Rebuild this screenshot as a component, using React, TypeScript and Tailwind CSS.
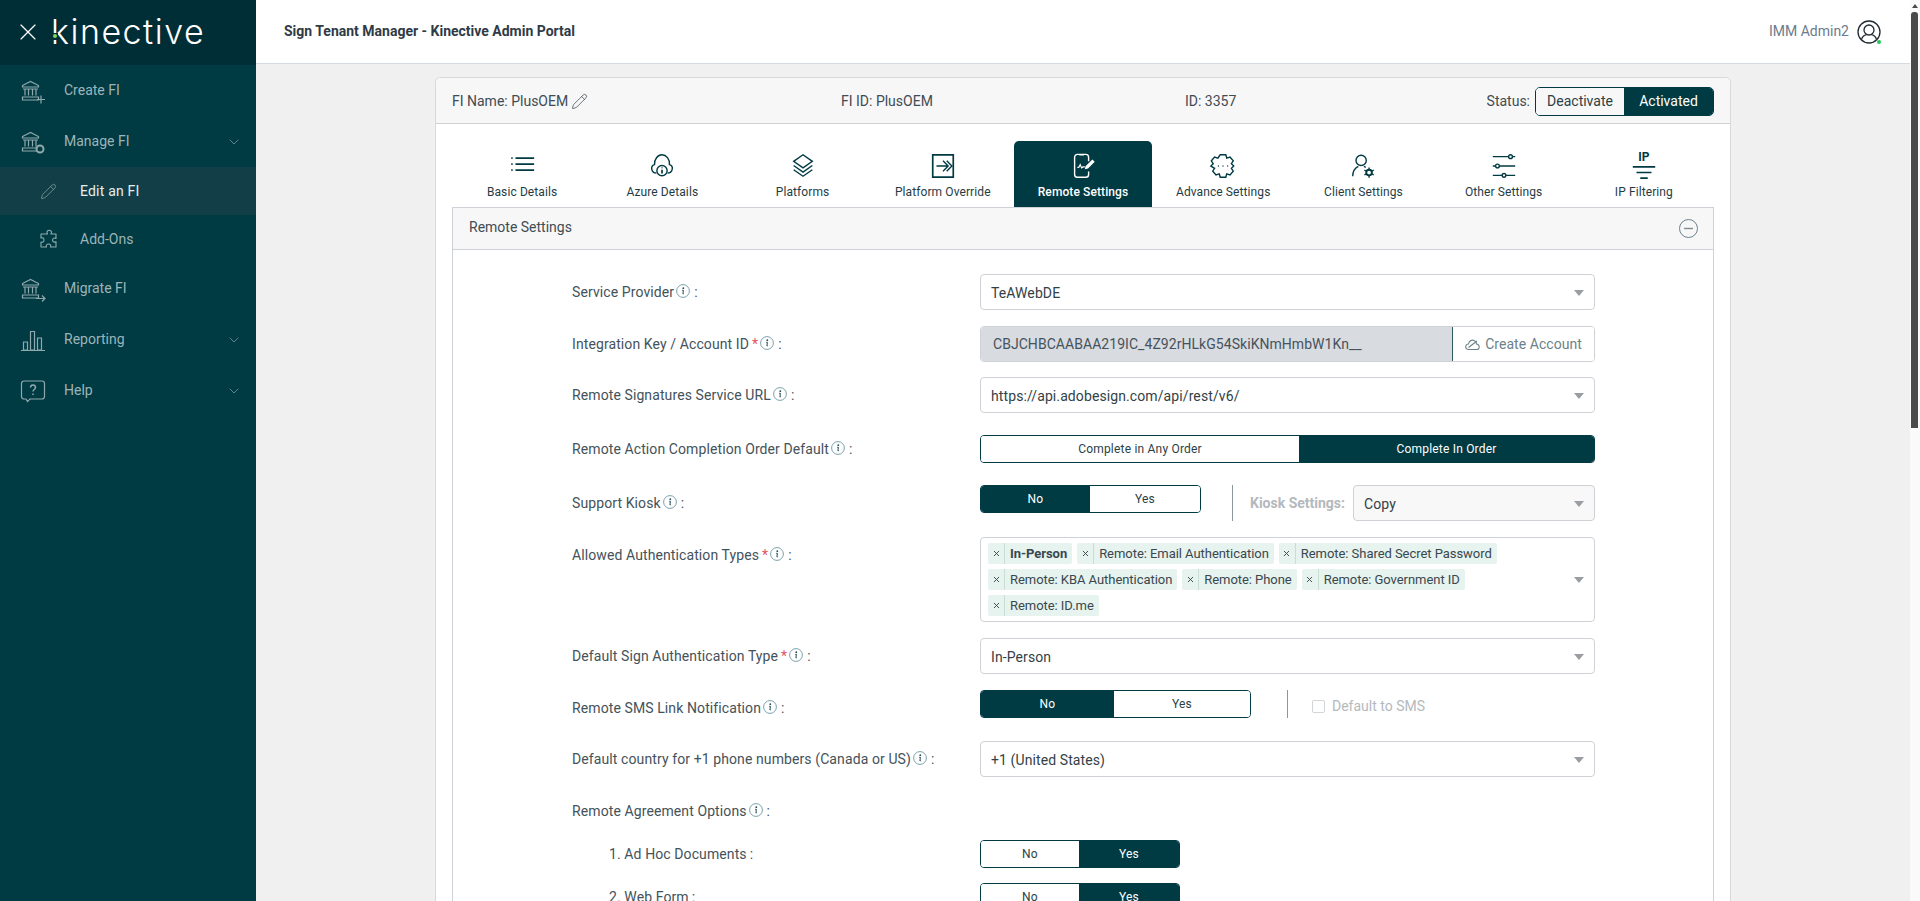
import React from "react"
import { ChevronDown, Pencil, X } from "lucide-react"

const Bank = ({ children }: { children?: React.ReactNode }) => (
  <svg width="26" height="26" viewBox="0 0 26 26" fill="none" stroke="#8fa9ad" strokeWidth="1.2">
    <path d="M2.5 7.5 10.5 3.5l8 4v1.5h-16z" />
    <path d="M5 11v6.5M8.5 11v6.5M12.5 11v6.5M16 11v6.5" />
    <path d="M3 11h15M2.5 19h16v3h-16z" />
    {children}
  </svg>
)

const BarsIcon = () => (
  <svg width="26" height="26" viewBox="0 0 26 26" fill="none" stroke="#8fa9ad" strokeWidth="1.2">
    <path d="M3.5 15h4v8h-4zM10.5 4.5h4V23h-4zM17.5 11h4v12h-4zM1 23.5h24" />
  </svg>
)

const HelpIcon = () => (
  <svg width="26" height="26" viewBox="0 0 26 26" fill="none" stroke="#8fa9ad" strokeWidth="1.2">
    <path d="M5 3h17a2.5 2.5 0 0 1 2.5 2.5v13A2.5 2.5 0 0 1 22 21H10l-2.5 2.5L6 21H4a2.5 2.5 0 0 1-2.5-2.5v-13A2.5 2.5 0 0 1 4 3z" />
    <path d="M10.5 9.5c0-3.500 5-3.500 5 0 0 2-2.500 2-2.500 4M13 15.500v1.500" strokeWidth="1.500" />
  </svg>
)

const PuzzleIcon = () => (
  <svg width="20" height="20" viewBox="0 0 20 20" fill="none" stroke="#8fa9ad" strokeWidth="1.1" strokeLinejoin="round">
    <path d="M8 3.500c0-3 4.500-3 4.500 0 0 1-.5 1.200-.5 1.500h5v4.500c-1.500-1-3.500-.3-3.500 1.500s2 2.700 3.500 1.700V18h-5.500c.8-1.500-.2-3-2-3s-2.800 1.500-2 3H2v-5c1.500.8 3-.2 3-2s-1.500-2.800-3-2V5h6.500c-.2-.5-.5-.7-.5-1.500z" />
  </svg>
)

const InfoDot = () => (
  <svg width="14" height="14" viewBox="0 0 14 14" fill="none" className="ml-[2px] shrink-0 -translate-y-[1px]">
    <circle cx="7" cy="7" r="6.400" stroke="#6d96a3" strokeWidth="0.9" />
    <circle cx="7.300" cy="4.200" r="0.900" fill="#234a55" />
    <path d="M6.200 6.300h1.200l-.5 3.500h.9" stroke="#234a55" strokeWidth="1" />
  </svg>
)

const Caret = () => (
  <svg width="10" height="6" viewBox="0 0 10 6" className="shrink-0">
    <path d="M0 0h10L5 6z" fill="#9a9ea2" />
  </svg>
)

const tabIcons: Record<string, React.ReactNode> = {
  basic: (
    <path d="M8 5.500h20M8 12h20M8 18.500h20M3.500 5.500h1.500M3.500 12h1.500M3.500 18.500h1.500" strokeWidth="1.800" />
  ),
  azure: (
    <>
      <path d="M9 21.500C3.500 21.500 2 14 7 12.500 6.500 7 10.500 2 15 2s8.500 4.500 8 10.500c5 1.500 3.500 9 -2 9" />
      <circle cx="15" cy="19" r="5.500" />
      <path d="M15 18v4M15 15.500v1" strokeWidth="1.800" />
    </>
  ),
  platforms: (
    <>
      <path d="M15 2 25 9 15 16 5 9z" />
      <path d="M5 13.500 15 20.500 25 13.500M5 18 15 25 25 18" />
    </>
  ),
  override: (
    <>
      <path d="M4 2h22v24H4z" strokeWidth="1.800" />
      <path d="M8 14h12M15 8.500l5.500 5.500-5.500 5.500M19 8.500l5.500 5.500L19 19.500" />
    </>
  ),
  remote: (
    <>
      <path d="M21 9V4.500A3 3 0 0 0 18 1.500H9a3 3 0 0 0-3 3V23a3 3 0 0 0 3 3h9a3 3 0 0 0 3-3v-3" />
      <path d="M11 2h5" />
      <path d="M9 15.500h1.500l1.500-3 1.500 3.500 1.500-1h2" strokeWidth="1.300" />
      <path d="M18.500 14.500 25 8l1.500 1.500-6.500 6.500-2 .5z" fill="currentColor" />
    </>
  ),
  advance: (
    <>
      <path d="M12 2h6l1 3.500 3.500-1 3.500 4-2 3 2.500 2.500-2.500 2.500 2 3-3.500 4-3.500-1-1 3.500h-6l-1-3.500-3.500 1-3.500-4 2-3L2 14l2.500-2.500-2-3 3.500-4 3.500 1z" />
      <path d="M9.500 14h1M14.500 14h1M19.500 14h1" />
    </>
  ),
  client: (
    <>
      <circle cx="13" cy="8" r="5.500" />
      <path d="M4 25c0-6 3-9 6-10.500M16 14.500l2 1" />
      <circle cx="21.500" cy="21" r="3" strokeWidth="2" />
      <path d="M21.500 15.500v2M21.500 24.500v2M16.500 18.500l2 1M24.500 22.500l2 1M16.500 23.500l2-1M24.500 19.500l2-1" strokeWidth="1.500" />
    </>
  ),
  other: (
    <>
      <path d="M3 4h17M24 4h3M3 14h3M10 14h17M3 24h10M17 24h10" strokeWidth="1.500" />
      <circle cx="22" cy="4" r="2" strokeWidth="1.500" />
      <circle cx="8" cy="14" r="2" strokeWidth="1.500" />
      <circle cx="15" cy="24" r="2" strokeWidth="1.500" />
    </>
  ),
  ip: <path d="M3 15h24M7 21h16M11 27h8" strokeWidth="1.800" />,
}

const tabs = [
  { id: "basic", label: "Basic Details" },
  { id: "azure", label: "Azure Details" },
  { id: "platforms", label: "Platforms" },
  { id: "override", label: "Platform Override" },
  { id: "remote", label: "Remote Settings" },
  { id: "advance", label: "Advance Settings" },
  { id: "client", label: "Client Settings" },
  { id: "other", label: "Other Settings" },
  { id: "ip", label: "IP Filtering" },
]

const chips = [
  "In-Person",
  "Remote: Email Authentication",
  "Remote: Shared Secret Password",
  "Remote: KBA Authentication",
  "Remote: Phone",
  "Remote: Government ID",
  "Remote: ID.me",
]

const Label = ({ text, required, info = true }: { text: string; required?: boolean; info?: boolean }) => (
  <div className="flex items-center text-[14px] leading-5 tracking-[0.1px] text-[#44525a]">
    <span>{text}</span>
    {required && <span className="ml-[3px] text-[#e2545f]">*</span>}
    {info && <InfoDot />}
    <span className={info ? "ml-[4px]" : "ml-[3px]"}>:</span>
  </div>
)

const Select = ({ value, muted }: { value: string; muted?: boolean }) => (
  <div
    className={`flex h-[36px] w-full items-center justify-between rounded border border-[#ced2d6] pl-[10px] pr-[10px] pt-[2px] text-[14px] tracking-[0.1px] text-[#333f46] ${
      muted ? "bg-[#f8f8f8]" : "bg-white"
    }`}
  >
    <span>{value}</span>
    <Caret />
  </div>
)

const Toggle = ({
  left,
  right,
  active,
  leftClass,
  rightClass,
}: {
  left: string
  right: string
  active: "left" | "right"
  leftClass: string
  rightClass: string
}) => (
  <div className="flex h-[28px] overflow-hidden rounded border border-[#003a43] text-[12px] tracking-[0.2px]">
    <div
      className={`flex items-center justify-center ${leftClass} ${
        active === "left" ? "bg-[#003a43] text-white" : "bg-white text-[#2b3f46]"
      }`}
    >
      {left}
    </div>
    <div
      className={`flex items-center justify-center ${rightClass} ${
        active === "right" ? "bg-[#003a43] text-white" : "bg-white text-[#2b3f46]"
      }`}
    >
      {right}
    </div>
  </div>
)

const NavItem = ({ icon, label, chevron }: { icon: React.ReactNode; label: string; chevron?: boolean }) => (
  <div className="flex h-[51px] items-center pl-[20px] pr-[14px] text-[14px] text-[#9cb5b9]">
    <div className="flex w-[44px] shrink-0 items-center">{icon}</div>
    <span className="flex-1">{label}</span>
    {chevron && <ChevronDown size={16} strokeWidth={1} className="text-[#8fa9ad]" />}
  </div>
)

const Row = ({ label, className, children, top }: { label: React.ReactNode; className: string; children: React.ReactNode; top?: boolean }) => (
  <div className={`grid grid-cols-[408px_615px] ${top ? "items-start" : "items-center"} ${className}`}>
    {label}
    {children}
  </div>
)

export default function App() {
  return (
    <div className="flex h-screen overflow-hidden bg-[#f0f0f0] font-['Roboto',sans-serif]">
      <aside className="flex w-[256px] shrink-0 flex-col bg-[#003a43]">
        <div className="flex h-[65px] shrink-0 items-center bg-[#002e37] pb-[1px] pl-[14px]">
          <X size={28} strokeWidth={1} className="text-white" />
          <div className="relative ml-[9px] font-['Inter',sans-serif] text-[34px] font-light leading-none tracking-[1.5px] text-white">
            kinective
            <span className="absolute left-[1px] top-[18px] h-[7px] w-[6px] bg-[#002e37]">
              <span className="absolute left-[1px] top-[1px] h-[4px] w-[4px] rounded-full bg-[#7ed957]" />
            </span>
          </div>
        </div>
        <NavItem
          label="Create FI"
          icon={
            <Bank>
              <path d="M17 21.500h8M21 17.500v8" />
            </Bank>
          }
        />
        <NavItem
          label="Manage FI"
          chevron
          icon={
            <Bank>
              <circle cx="20" cy="20" r="3.500" fill="#003a43" strokeWidth="2" />
            </Bank>
          }
        />
        <div className="flex h-[48px] items-center bg-[#123f47] pl-[40px] text-[14px] tracking-[0.2px] text-[#e6eeef]">
          <div className="w-[40px]">
            <Pencil size={17} strokeWidth={1} className="text-[#8fa9ad]" />
          </div>
          Edit an FI
        </div>
        <div className="flex h-[48px] items-center pl-[39px] text-[14px] text-[#9cb5b9]">
          <div className="w-[41px]">
            <PuzzleIcon />
          </div>
          Add-Ons
        </div>
        <NavItem
          label="Migrate FI"
          icon={
            <Bank>
              <path d="M16 22.500h9M22 19.500l3 3-3 3" />
            </Bank>
          }
        />
        <NavItem label="Reporting" chevron icon={<BarsIcon />} />
        <NavItem label="Help" chevron icon={<HelpIcon />} />
      </aside>

      <div className="flex min-w-0 flex-1 flex-col">
        <header className="flex h-[64px] shrink-0 items-center justify-between border-b border-[#d5d9e0] bg-white pl-[28px] pr-[29px]">
          <div className="text-[14px] font-bold text-[#2f3b46]">Sign Tenant Manager - Kinective Admin Portal</div>
          <div className="flex items-center gap-[8px] text-[14px] text-[#6b7c8c]">
            IMM Admin2
            <div className="relative">
              <svg width="24" height="24" viewBox="0 0 24 24" fill="none" stroke="#1f2a30" strokeWidth="1.300">
                <circle cx="12" cy="12" r="11" />
                <circle cx="12" cy="10" r="5" />
                <path d="M4.500 19.500c1-3.500 3.500-4.500 5-4.800M19.500 19.500c-1-3.500-3.500-4.500-5-4.800" />
              </svg>
              <span className="absolute bottom-0 right-0 h-[4px] w-[4px] rounded-full bg-[#22c55e]" />
            </div>
          </div>
        </header>

        <main className="min-h-0 flex-1 overflow-hidden">
          <div className="mx-auto mt-[13px] w-[1296px] rounded-t-[5px] border border-[#d9d9d9] bg-white">
            <div className="flex h-[46px] items-center rounded-t-[5px] border-b border-[#d0d0d0] bg-[#f7f7f7] pl-[16px] pr-[16px] pt-[2px] text-[14px] text-[#3f4c54]">
              <div className="flex w-[389px] items-center gap-[3px]">
                FI Name: PlusOEM
                <Pencil size={17} strokeWidth={1} className="text-[#333f46]" />
              </div>
              <div className="w-[344px]">FI ID: PlusOEM</div>
              <div className="flex-1">ID: 3357</div>
              <div className="mr-[5px]">Status:</div>
              <div className="flex h-[29px] overflow-hidden rounded-[5px] border border-[#003a43]">
                <div className="flex w-[88px] items-center justify-center bg-[#f7f7f7] text-[#2b3f46]">Deactivate</div>
                <div className="flex w-[89px] items-center justify-center bg-[#003a43] text-white">Activated</div>
              </div>
            </div>

            <div className="px-[16px] pb-[20px]">
              <div className="mt-[17px] grid h-[66px] grid-cols-9">
                {tabs.map((t) => {
                  const active = t.id === "remote"
                  return (
                    <div
                      key={t.id}
                      className={`relative flex flex-col items-center pt-[11px] ${
                        active ? "mx-[1px] rounded-t-[5px] bg-[#003a43] text-white" : "text-[#003a43]"
                      }`}
                    >
                      <svg
                        width="28"
                        height="28"
                        viewBox="0 0 30 28"
                        fill="none"
                        stroke="currentColor"
                        strokeWidth="1.500"
                      >
                        {tabIcons[t.id]}
                      </svg>
                      {t.id === "ip" && (
                        <span className="absolute left-0 right-0 top-[10px] text-center text-[12px] font-bold leading-none">IP</span>
                      )}
                      <div
                        className={`mt-[2px] text-[12px] leading-5 tracking-[0.1px] ${active ? "font-medium" : "text-[#1f3c45]"}`}
                      >
                        {t.label}
                      </div>
                    </div>
                  )
                })}
              </div>

              <div className="border border-[#ced2d6]">
                <div className="flex h-[42px] items-center justify-between border-b border-[#ced2d6] bg-[#f7f7f7] pl-[16px] pr-[15px] text-[14px] text-[#3f4c54]">
                  <span className="pb-[2px]">Remote Settings</span>
                  <svg width="19" height="19" viewBox="0 0 19 19" fill="none" stroke="#5c7580">
                    <circle cx="9.500" cy="9.500" r="9" strokeWidth="0.900" />
                    <path d="M5 9.500h9" strokeWidth="1.400" stroke="#7f8c92" />
                  </svg>
                </div>

                <div className="pb-[40px] pl-[119px] pt-[24px]">
                  <Row label={<Label text="Service Provider" />} className="">
                    <Select value="TeAWebDE" />
                  </Row>

                  <Row label={<Label text="Integration Key / Account ID" required />} className="mt-[16px]">
                    <div className="flex h-[36px] overflow-hidden rounded border border-[#ced2d6] text-[14px] tracking-[0.05px]">
                      <div className="flex flex-1 items-center bg-[#d8dbe0] pl-[12px] text-[#46535c]">
                        CBJCHBCAABAA219IC_4Z92rHLkG54SkiKNmHmbW1Kn__
                      </div>
                      <div className="flex w-[142px] items-center justify-center gap-[5px] border-l border-[#2f5b64] bg-white text-[#6b8288]">
                        <svg width="15" height="13" viewBox="0 0 15 13" fill="none" stroke="#6b8288" strokeWidth="1.100">
                          <path d="M4 11.500C1.500 11.500 0 10 1 7.500 1.500 6 3 6 3.500 6 4 3 6.500 1.500 9 2.500c2 .8 2.500 2.500 2.500 3.500 2.500.3 3 2.500 2.500 4-.4 1-1 1.500-2 1.500z" />
                          <path d="M3.500 9.500 12 3" />
                        </svg>
                        Create Account
                      </div>
                    </div>
                  </Row>

                  <Row label={<Label text="Remote Signatures Service URL" />} className="mt-[15px]">
                    <Select value="https://api.adobesign.com/api/rest/v6/" />
                  </Row>

                  <Row label={<Label text="Remote Action Completion Order Default" />} className="mt-[22px]">
                    <Toggle
                      left="Complete in Any Order"
                      right="Complete In Order"
                      active="right"
                      leftClass="w-[318px]"
                      rightClass="flex-1"
                    />
                  </Row>

                  <Row label={<Label text="Support Kiosk" />} className="mt-[22px]">
                    <div className="flex h-[36px] items-start">
                      <div className="w-[221px]">
                        <Toggle left="No" right="Yes" active="left" leftClass="w-[109px]" rightClass="flex-1" />
                      </div>
                      <div className="ml-[31px] h-[36px] w-px bg-[#8a979c]" />
                      <div className="ml-[17px] flex h-[36px] w-[103px] items-center text-[14px] font-bold text-[#b4b9bd]">
                        Kiosk Settings:
                      </div>
                      <div className="w-[242px]">
                        <Select value="Copy" muted />
                      </div>
                    </div>
                  </Row>

                  <Row label={<div className="pt-[8px]"><Label text="Allowed Authentication Types" required /></div>} className="mt-[16px]" top>
                    <div className="flex h-[85px] items-center rounded border border-[#ced2d6] pl-[7px] pr-[10px]">
                      <div className="flex flex-1 flex-wrap gap-[5px] pr-[12px]">
                        {chips.map((c, i) => (
                          <div key={c} className="flex h-[21px] items-center rounded-[2px] bg-[#e6f3ee] text-[13px] tracking-[-0.05px] text-[#3a474e]">
                            <div className="flex h-full w-[17px] items-center justify-center border-r border-[#c9ddd5] text-[#3a474e]">
                              <X size={9} strokeWidth={2.5} />
                            </div>
                            <span className={`px-[5px] ${i === 0 ? "font-bold" : ""}`}>{c}</span>
                          </div>
                        ))}
                      </div>
                      <Caret />
                    </div>
                  </Row>

                  <Row label={<Label text="Default Sign Authentication Type" required />} className="mt-[16px]">
                    <Select value="In-Person" />
                  </Row>

                  <Row label={<Label text="Remote SMS Link Notification" />} className="mt-[16px]">
                    <div className="flex h-[36px] items-start">
                      <div className="w-[271px]">
                        <Toggle left="No" right="Yes" active="left" leftClass="w-[133px]" rightClass="flex-1" />
                      </div>
                      <div className="ml-[36px] h-[28px] w-px bg-[#8a979c]" />
                      <div className="ml-[24px] flex h-[32px] items-center gap-[7px] text-[14px] text-[#b4b9bd]">
                        <span className="h-[13px] w-[13px] rounded-[2px] border border-[#d3d6d9] bg-white" />
                        Default to SMS
                      </div>
                    </div>
                  </Row>

                  <Row label={<Label text="Default country for +1 phone numbers (Canada or US)" />} className="mt-[15px]">
                    <Select value="+1 (United States)" />
                  </Row>

                  <Row label={<Label text="Remote Agreement Options" />} className="mt-[24px]">
                    <div className="h-[20px]" />
                  </Row>

                  <Row label={<div className="pl-[37px]"><Label text="1. Ad Hoc Documents" info={false} /></div>} className="mt-[19px]">
                    <div className="w-[200px]">
                      <Toggle left="No" right="Yes" active="right" leftClass="w-[98px]" rightClass="flex-1" />
                    </div>
                  </Row>

                  <Row label={<div className="pl-[37px]"><Label text="2. Web Form" info={false} /></div>} className="mt-[15px]">
                    <div className="w-[200px]">
                      <Toggle left="No" right="Yes" active="right" leftClass="w-[98px]" rightClass="flex-1" />
                    </div>
                  </Row>
                </div>
              </div>
            </div>
          </div>
        </main>
      </div>

      <div className="flex w-[10px] shrink-0 flex-col items-center bg-[#fafafa] pl-[1px] pr-[2px]">
        <div className="mt-[4px] h-0 w-0 border-x-[3px] border-b-[4px] border-x-transparent border-b-[#4a4a4a]" />
        <div className="mt-[4px] h-[416px] w-full rounded-t-[3px] bg-[#4a4a4a]" />
      </div>
    </div>
  )
}
